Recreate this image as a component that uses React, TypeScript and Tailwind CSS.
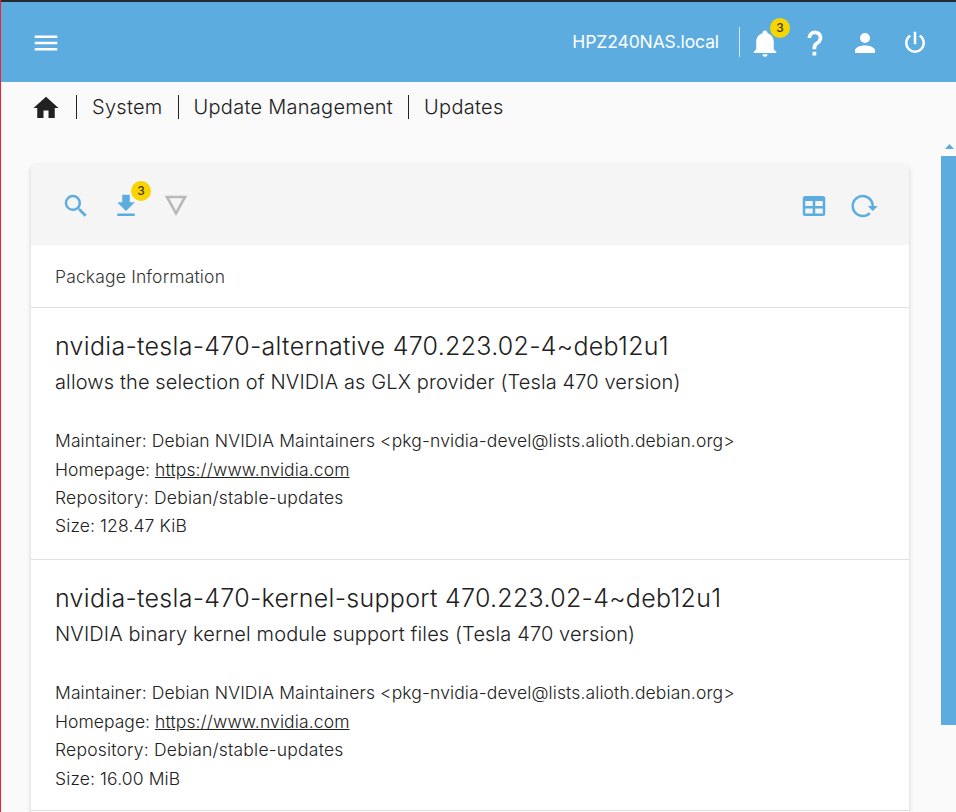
import type { ReactNode } from "react";

const icons = {
  menu: "M3,6H21V8H3V6M3,11H21V13H3V11M3,16H21V18H3V16Z",
  home: "M10,20V14H14V20H19V12H22L12,3L2,12H5V20H10Z",
  bell: "M21,19V20H3V19L5,17V11C5,7.9 7.03,5.17 10,4.29C10,4.19 10,4.1 10,4A2,2 0 0,1 12,2A2,2 0 0,1 14,4C14,4.1 14,4.19 14,4.29C16.97,5.17 19,7.9 19,11V17L21,19M14,21A2,2 0 0,1 12,23A2,2 0 0,1 10,21",
  help: "M10,19H13V22H10V19M12,2C17.35,2.22 19.68,7.62 16.5,11.67C15.67,12.67 14.33,13.33 13.67,14.17C13,15 13,16 13,17H10C10,15.33 10,13.92 10.67,12.92C11.33,11.92 12.67,11.33 13.5,10.67C15.92,8.43 15.32,5.26 12,5A3,3 0 0,0 9,8H6A6,6 0 0,1 12,2Z",
  account:
    "M12,4A4,4 0 0,1 16,8A4,4 0 0,1 12,12A4,4 0 0,1 8,8A4,4 0 0,1 12,4M12,14C16.42,14 20,15.79 20,18V20H4V18C4,15.79 7.58,14 12,14Z",
  power:
    "M16.56,5.44L15.11,6.89C16.84,7.94 18,9.83 18,12A6,6 0 0,1 12,18A6,6 0 0,1 6,12C6,9.83 7.16,7.94 8.88,6.88L7.44,5.44C5.36,6.88 4,9.28 4,12A8,8 0 0,0 12,20A8,8 0 0,0 20,12C20,9.28 18.64,6.88 16.56,5.44M13,3H11V13H13",
  search:
    "M9.5,3A6.5,6.5 0 0,1 16,9.5C16,11.11 15.41,12.59 14.44,13.73L14.71,14H15.5L20.5,19L19,20.5L14,15.5V14.71L13.73,14.44C12.59,15.41 11.11,16 9.5,16A6.5,6.5 0 0,1 3,9.5A6.5,6.5 0 0,1 9.5,3M9.5,5C7,5 5,7 5,9.5C5,12 7,14 9.5,14C12,14 14,12 14,9.5C14,7 12,5 9.5,5Z",
  download: "M5,20H19V18H5M19,9H15V3H9V9H5L12,16L19,9Z",
  triangle: "M3,3.7H21L12,20ZM6.6,5.8L12,15.7L17.4,5.8Z",
  table:
    "M5,4H19A2,2 0 0,1 21,6V18A2,2 0 0,1 19,20H5A2,2 0 0,1 3,18V6A2,2 0 0,1 5,4M5,8V12H11V8H5M13,8V12H19V8H13M5,14V18H11V14H5M13,14V18H19V14H13Z",
  reload:
    "M2 12C2 16.97 6.03 21 11 21C13.39 21 15.68 20.06 17.4 18.4L15.9 16.9C14.63 18.25 12.86 19 11 19C4.76 19 1.64 11.46 6.05 7.05C10.46 2.64 18 5.77 18 12H15L19 16H19.1L23 12H20C20 7.03 15.97 3 11 3C6.03 3 2 7.03 2 12Z",
};

function Icon({ name }: { name: keyof typeof icons }) {
  return (
    <svg viewBox="0 0 24 24" className="block size-[30px] shrink-0" fill="currentColor" fillRule="evenodd">
      <path d={icons[name]} />
    </svg>
  );
}

function Badged({ count, children }: { count: number; children: ReactNode }) {
  return (
    <div className="relative">
      {children}
      <span className="absolute -top-[10px] left-[20px] flex size-5 items-center justify-center rounded-full bg-[#f8d500] text-[12px] leading-none font-medium text-[#4a3a0c]">
        {count}
      </span>
    </div>
  );
}

const packages = [
  {
    title: "nvidia-tesla-470-alternative 470.223.02-4~deb12u1",
    summary: "allows the selection of NVIDIA as GLX provider (Tesla 470 version)",
    size: "128.47 KiB",
  },
  {
    title: "nvidia-tesla-470-kernel-support 470.223.02-4~deb12u1",
    summary: "NVIDIA binary kernel module support files (Tesla 470 version)",
    size: "16.00 MiB",
  },
];

export default function App() {
  return (
    <div className="flex h-[812px] w-[956px] flex-col overflow-hidden border-l border-[#ee2434] bg-[#fafafa] font-['Inter',sans-serif] font-light text-[#212121]">
      <header className="flex h-[82px] shrink-0 items-center border-t-2 border-[#232a31] bg-[#5dacdf] pt-[2px] pr-[26px] pl-[30px] text-white">
        <Icon name="menu" />
        <div className="mr-5 -mt-[2px] ml-auto text-[17.5px] font-normal tracking-[-0.12px]">HPZ240NAS.local</div>
        <div className="mr-[10px] -mt-[2px] h-[30px] w-px bg-white/70" />
        <div className="flex gap-5">
          <Badged count={3}>
            <Icon name="bell" />
          </Badged>
          <Icon name="help" />
          <Icon name="account" />
          <Icon name="power" />
        </div>
      </header>

      <nav className="flex h-[50px] shrink-0 items-center pl-[30px] text-[20px] tracking-[0.27px]">
        <div className="pt-[2px]">
          <Icon name="home" />
        </div>
        <span className="ml-[15px] h-6 w-px bg-[#212121]" />
        <span className="ml-[15px]">System</span>
        <span className="ml-[15px] h-6 w-px bg-[#212121]" />
        <span className="ml-[15px]">Update Management</span>
        <span className="ml-[15px] h-6 w-px bg-[#212121]" />
        <span className="ml-[15px]">Updates</span>
      </nav>

      <div className="flex min-h-0 flex-1 justify-between">
        <main className="mt-8 ml-[30px] w-[878px] rounded-t-[5px] bg-white shadow-[0_2px_4px_rgba(0,0,0,0.18)]">
          <div className="flex h-[81px] items-center gap-5 rounded-t-[5px] bg-[#f5f5f5] px-[30px] pt-[2px] text-[#5dacdf]">
            <Icon name="search" />
            <Badged count={3}>
              <Icon name="download" />
            </Badged>
            <div className="text-[#b9b9b9]">
              <Icon name="triangle" />
            </div>
            <div className="ml-auto">
              <Icon name="table" />
            </div>
            <Icon name="reload" />
          </div>
          <div className="flex h-[63px] items-center border-b border-[#e0e0e0] px-6 pt-[2px] text-[17.5px] tracking-[0.16px] text-[#333]">
            Package Information
          </div>
          {packages.map((p) => (
            <section key={p.title} className="group h-[251.5px] border-b border-[#e0e0e0] px-6 pt-5">
              <h2 className="text-[25px] leading-[36px] tracking-[0.29px]">{p.title}</h2>
              <p className="text-[20px] leading-[36px] tracking-[0.12px]">{p.summary}</p>
              <div className="mt-[27.2px] text-[17.5px] leading-[28.4px] tracking-[0.12px] group-last:mt-[27.9px]">
                <p>Maintainer: Debian NVIDIA Maintainers &lt;pkg-nvidia-devel@lists.alioth.debian.org&gt;</p>
                <p>
                  <span className="tracking-[0.04px]">Homepage: </span>
                  <a className="underline">https://www.nvidia.com</a>
                </p>
                <p className="tracking-[0.2px]">Repository: Debian/stable-updates</p>
                <p>Size: {p.size}</p>
              </div>
            </section>
          ))}
        </main>

        <div className="flex w-[15px] flex-col items-center pt-3">
          <svg viewBox="0 0 9 5" className="ml-[2px] h-[5px] w-[9px] fill-[#5dacdf]">
            <path d="M0 5L4.5 0L9 5Z" />
          </svg>
          <div className="mt-[7px] h-[569px] w-[15px] bg-[#5dacdf]" />
        </div>
      </div>
    </div>
  );
}
